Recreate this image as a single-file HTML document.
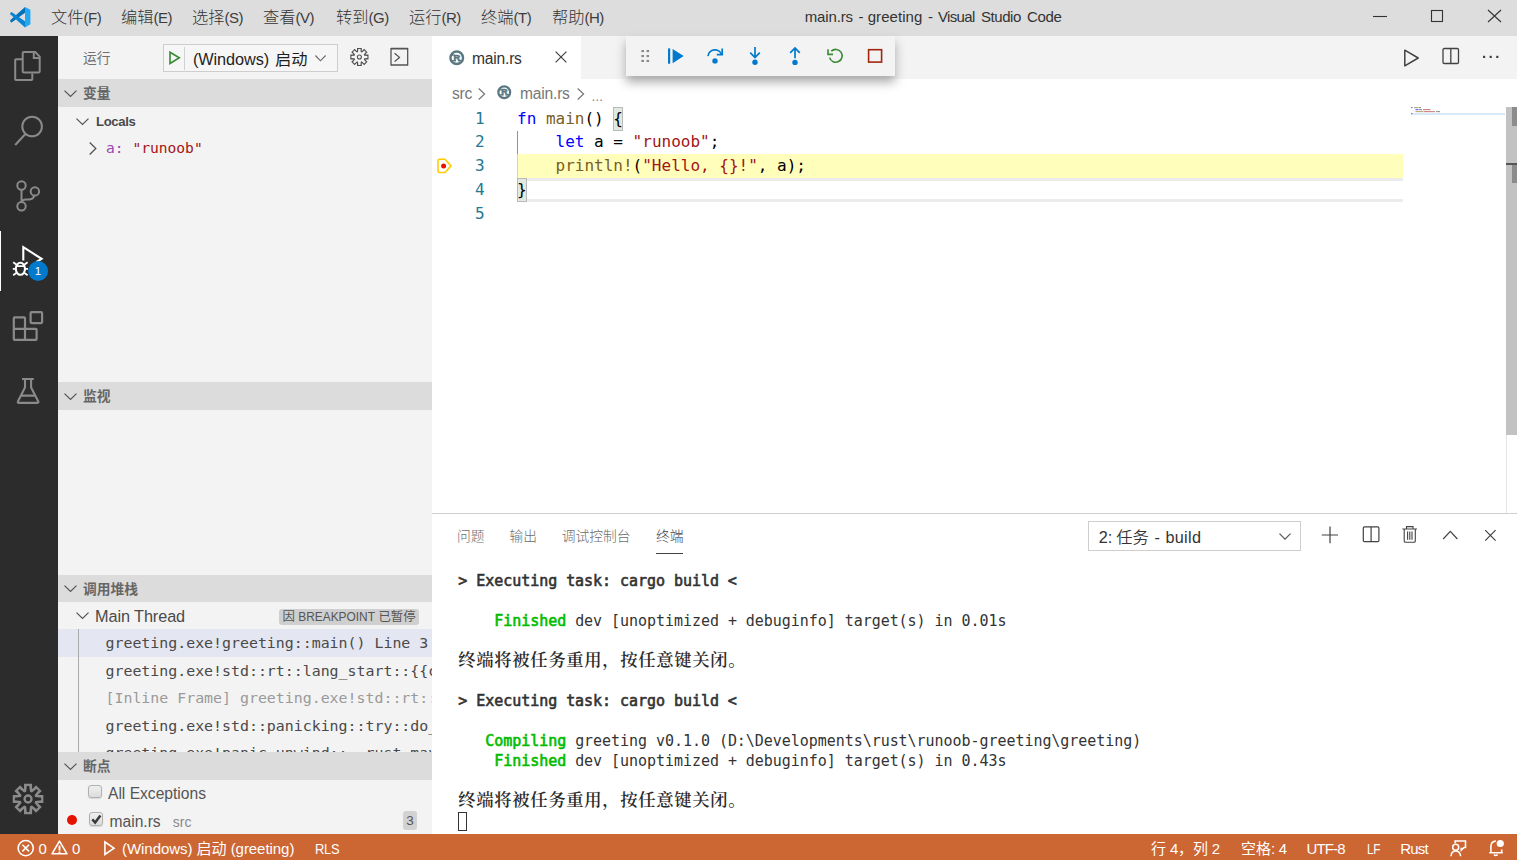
<!DOCTYPE html>
<html lang="zh-CN">
<head>
<meta charset="utf-8">
<title>main.rs - greeting - Visual Studio Code</title>
<style>
*{box-sizing:border-box;margin:0;padding:0}
html,body{width:1517px;height:860px;overflow:hidden;background:#fff}
body{position:relative;font-family:"Liberation Sans","Noto Sans CJK SC",sans-serif;color:#333;font-size:16px}
.abs{position:absolute}
.mono{font-family:"DejaVu Sans Mono","Liberation Mono","Noto Sans CJK SC",monospace}
svg{display:block;overflow:visible}
/* title bar */
#titlebar{left:0;top:0;width:1517px;height:36px;background:#dddddd}
.menu{top:0;height:36px;line-height:34px;font-size:16.25px;color:#333;white-space:nowrap;font-weight:300}
.menu i{font-style:normal;font-size:15px;letter-spacing:-0.5px;font-weight:400;color:#3c3c3c}
#wtitle{top:0;height:36px;line-height:34px;font-size:15px;color:#333;white-space:nowrap;letter-spacing:-0.03px}
/* activity bar */
#activity{left:0;top:36px;width:58px;height:798px;background:#2c2c2c}
/* sidebar */
#sidebar{left:58px;top:36px;width:374px;height:798px;background:#f3f3f3;overflow:hidden}
.sechead{left:0;width:374px;height:27.5px;background:#dcdcdc;font-weight:bold;font-size:13.75px;color:#666;line-height:30px}
.sechead span{position:absolute;left:25px;top:0;white-space:nowrap}
.row{left:0;width:374px;white-space:nowrap}
.cb{width:13.5px;height:13.5px;border:1px solid #b1b1b1;border-radius:3px;background:linear-gradient(#efefef,#dcdcdc);box-shadow:0 1px 1px rgba(0,0,0,0.12)}
/* editor */
#tabs{left:432px;top:36px;width:1085px;height:43px;background:#f3f3f3}
#tab1{left:0;top:0;width:149px;height:43px;background:#fff}
#editor{left:432px;top:79px;width:1085px;height:434px;background:#fff;overflow:hidden}
.ln{left:0;width:52.6px;text-align:right;color:#237893;font-size:16px;height:24px;line-height:24px}
.code{left:85px;white-space:pre;font-size:16px;height:24px;line-height:24px;color:#000}
.bc{height:27.5px;line-height:29.5px;font-size:15.6px;color:#777;white-space:nowrap;letter-spacing:-0.2px}
.k{color:#0000ff}.f{color:#795e26}.s{color:#a31515}
/* panel */
#panel{left:432px;top:513px;width:1085px;height:321px;background:#fff;border-top:1px solid #cfcfcf}
.ptab{top:12px;font-size:13.75px;color:#6c6c6c;white-space:nowrap;line-height:22px;font-weight:300}
.tl{left:26.3px;letter-spacing:-0.045px;white-space:pre;font-size:15px;height:20px;line-height:20px;color:#333}
.tl b{font-weight:normal;-webkit-text-stroke:0.6px currentColor}
.tl .g{color:#00bc00}
.cj{font-family:"Noto Serif CJK SC","Noto Sans CJK SC",serif;font-size:17.4px;letter-spacing:0.6px;font-weight:600;color:#2a2a2a;position:relative;top:-1.6px}
.dd{top:10px;height:27px;line-height:27px;font-size:16.25px;color:#333;white-space:nowrap}
/* status */
#status{left:0;top:834px;width:1517px;height:26px;background:#cc6633;color:#fff;font-size:15px;line-height:29px;white-space:nowrap}
#status .it{position:absolute;top:0;height:26px;letter-spacing:-0.3px}
#status .sx{transform-origin:0 50%}
#status .c{font-size:15px;letter-spacing:0}
</style>
</head>
<body>
<div id="titlebar" class="abs">
<svg class="abs" style="left:9.76px;top:6.7px" width="20.4" height="20.4" viewBox="0 0 100 100"><path d="M73.7 0V28.3L9.4 75.3Q6 76.5 3.5 73L0.8 68.5Q0 66 2.5 63.5Z" fill="#0070bd"/><path d="M9.4 25.2L73.5 70.2L73.7 100L2.5 36.5Q0 34 0.8 31.5L3.5 27Q6 23.8 9.4 25.2Z" fill="#0a84d4"/><path d="M73.7 0L100 13.7V84.8L73.7 100Z" fill="#24a7f1"/></svg>
<div class="abs menu" style="left:51px">文件<i>(F)</i></div>
<div class="abs menu" style="left:121px">编辑<i>(E)</i></div>
<div class="abs menu" style="left:192px">选择<i>(S)</i></div>
<div class="abs menu" style="left:263px">查看<i>(V)</i></div>
<div class="abs menu" style="left:336px">转到<i>(G)</i></div>
<div class="abs menu" style="left:409px">运行<i>(R)</i></div>
<div class="abs menu" style="left:481px">终端<i>(T)</i></div>
<div class="abs menu" style="left:552px">帮助<i>(H)</i></div>
<div id="wtitle" class="abs" style="left:805px;width:260px"><span style="position:absolute;left:-0.30px;letter-spacing:-0.129px">main.rs</span><span style="position:absolute;left:53.50px;letter-spacing:0.000px">-</span><span style="position:absolute;left:62.70px;letter-spacing:0.062px">greeting</span><span style="position:absolute;left:123.10px;letter-spacing:0.000px">-</span><span style="position:absolute;left:132.90px;letter-spacing:-0.650px">Visual</span><span style="position:absolute;left:176.00px;letter-spacing:-0.438px">Studio</span><span style="position:absolute;left:222.10px;letter-spacing:-0.372px">Code</span></div>
<svg class="abs" style="left:1373px;top:9px" width="130" height="14" viewBox="0 0 130 14" fill="none" stroke="#333" stroke-width="1.1"><path d="M0 7.5H14"/><rect x="58.5" y="1.5" width="11" height="11"/><path d="M115 1L128 13M128 1L115 13"/></svg>
</div>
<div id="activity" class="abs">
<div class="abs" style="left:0;top:195px;width:1.3px;height:60px;background:#fff"></div>
<svg class="abs" style="left:0;top:0" width="58" height="798" viewBox="0 36 58 798" fill="none" stroke="#8a8a8a" stroke-width="2" stroke-linejoin="round">
<!-- files -->
<path d="M32.3 73.5V79.2Q32.3 80 31.5 80H16Q15.2 80 15.2 79.2V60.1Q15.2 59.3 16 59.3H22.5"/>
<path d="M24 52H35.2L39.7 56.6V71.2Q39.7 72.5 38.4 72.5H24Q22.7 72.5 22.7 71.2V53.3Q22.7 52 24 52Z"/>
<path d="M33.8 52.5V58H39.5" stroke-linejoin="miter"/>
<!-- search -->
<circle cx="32.1" cy="126.5" r="9.8"/>
<path d="M25.6 133.8L15.2 145"/>
<!-- scm -->
<circle cx="21.5" cy="185.5" r="4.2"/><circle cx="21.5" cy="206.3" r="4.2"/><circle cx="34.9" cy="191.4" r="4.2"/>
<path d="M21.5 189.7V202.1"/><path d="M34.3 195.6Q33.3 199.4 29.5 199.4H26Q22.3 199.4 21.6 202"/>
<!-- extensions -->
<path d="M14.6 317.4H24.2Q25 317.4 25 318.2V328.8H35.8Q36.6 328.8 36.6 329.6V339Q36.6 339.8 35.8 339.8H14.6Q13.8 339.8 13.8 339V318.2Q13.8 317.4 14.6 317.4Z M13.8 328.8H25V339.8" stroke-width="2.2"/>
<rect x="30.6" y="312.2" width="11.5" height="10.9" rx="1" stroke-width="2.2"/>
<!-- flask -->
<path d="M22 379H33.8M25 380V387.6L17.9 401.5Q17.4 402.9 18.9 402.9H37.4Q38.9 402.9 38.3 401.5L31.1 387.6V380M21.2 395.6H35" stroke-width="2.1"/>
<!-- gear -->
<path d="M43.35 794.95 L43.35 803.05 L37.83 803.05 L41.73 806.95 L36.00 812.68 L32.10 808.78 L32.10 814.30 L24.00 814.30 L24.00 808.78 L20.10 812.68 L14.37 806.95 L18.27 803.05 L12.75 803.05 L12.75 794.95 L18.27 794.95 L14.37 791.05 L20.10 785.32 L24.00 789.22 L24.00 783.70 L32.10 783.70 L32.10 789.22 L36.00 785.32 L41.73 791.05 L37.83 794.95Z" fill="#8a8a8a" stroke="none"/><path d="M33.05 796.80 L41.15 797.80 L41.15 800.20 L33.05 801.20ZM33.14 800.98 L38.16 807.41 L36.46 809.11 L30.03 804.09ZM30.25 804.00 L29.25 812.10 L26.85 812.10 L25.85 804.00ZM26.07 804.09 L19.64 809.11 L17.94 807.41 L22.96 800.98ZM23.05 801.20 L14.95 800.20 L14.95 797.80 L23.05 796.80ZM22.96 797.02 L17.94 790.59 L19.64 788.89 L26.07 793.91ZM25.85 794.00 L26.85 785.90 L29.25 785.90 L30.25 794.00ZM30.03 793.91 L36.46 788.89 L38.16 790.59 L33.14 797.02Z" fill="#2c2c2c" stroke="none"/><circle cx="28.05" cy="799" r="7.40" fill="#2c2c2c" stroke="none"/><circle cx="28.05" cy="799" r="3.50" fill="none" stroke="#8a8a8a" stroke-width="2.30"/>
<!-- debug (active) -->
<g stroke="#fff" stroke-width="2.1">
<path d="M23.3 260.5V247.2L41.6 258.8L36.5 262" stroke-linejoin="miter"/>
<ellipse cx="20.4" cy="268.8" rx="4.6" ry="6"/>
<path d="M16 266.2H24.8M12.8 268.8H15.8M25 268.8H28M13.2 262.3L16.6 264.8M27.6 262.3L24.2 264.8M13.2 275.3L16.6 272.8M27.6 275.3L24.2 272.8" stroke-width="1.8"/>
</g>
<circle cx="38.1" cy="271" r="10" fill="#007acc" stroke="none"/>
</svg>
<div class="abs" style="left:28px;top:225px;width:20px;height:20px;line-height:20px;text-align:center;color:#fff;font-size:11.5px">1</div>
</div>
<div id="sidebar" class="abs">
<div class="abs" style="left:25px;top:11.7px;font-size:13.75px;color:#717171;line-height:22px">运行</div>
<div class="abs" style="left:105px;top:8px;width:175px;height:28px;border:1px solid #cecece;background:#f6f6f6"></div>
<svg class="abs" style="left:111px;top:14px" width="12" height="15" viewBox="0 0 12 15" fill="none" stroke="#388a34" stroke-width="1.6" stroke-linejoin="miter"><path d="M1 2.2L10.3 7.8L1 13.5Z"/></svg>
<div class="abs" style="left:126px;top:11px;width:1px;height:23px;background:#d0d0d0"></div>
<div class="abs" style="left:135px;top:10px;height:26px;line-height:27px;font-size:16.25px;color:#1e1e1e;white-space:nowrap;letter-spacing:-0.08px">(Windows)</div><div class="abs" style="left:217px;top:10px;height:26px;line-height:27px;font-size:16.25px;color:#1e1e1e;white-space:nowrap">启动</div>
<svg class="abs" style="left:257px;top:18.6px" width="11" height="7" viewBox="0 0 11 7" fill="none" stroke="#666" stroke-width="1.1"><path d="M0.4 0.5L5.5 5.8L10.6 0.5"/></svg><svg class="abs" style="left:282px;top:4px" width="80" height="36" viewBox="340 40 80 36" fill="none" stroke="#4a4a4a" stroke-width="1.15"><path d="M368.50 54.60 L368.50 59.40 L365.19 59.40 L367.53 61.74 L364.14 65.13 L361.80 62.79 L361.80 66.10 L357.00 66.10 L357.00 62.79 L354.66 65.13 L351.27 61.74 L353.61 59.40 L350.30 59.40 L350.30 54.60 L353.61 54.60 L351.27 52.26 L354.66 48.87 L357.00 51.21 L357.00 47.90 L361.80 47.90 L361.80 51.21 L364.14 48.87 L367.53 52.26 L365.19 54.60Z" fill="#505050" stroke="none"/><path d="M362.40 55.50 L367.40 55.90 L367.40 58.10 L362.40 58.50ZM362.58 58.06 L365.83 61.88 L364.28 63.43 L360.46 60.18ZM360.90 60.00 L360.50 65.00 L358.30 65.00 L357.90 60.00ZM358.34 60.18 L354.52 63.43 L352.97 61.88 L356.22 58.06ZM356.40 58.50 L351.40 58.10 L351.40 55.90 L356.40 55.50ZM356.22 55.94 L352.97 52.12 L354.52 50.57 L358.34 53.82ZM357.90 54.00 L358.30 49.00 L360.50 49.00 L360.90 54.00ZM360.46 53.82 L364.28 50.57 L365.83 52.12 L362.58 55.94Z" fill="#f3f3f3" stroke="none"/><circle cx="359.4" cy="57" r="4.9" fill="#f3f3f3" stroke="none"/><circle cx="359.4" cy="57" r="2.0" fill="none" stroke="#505050" stroke-width="1.1"/>
<path d="M391 48.7H407.7M391 65H407.7" stroke-width="1.7" stroke="#555"/><path d="M391 48V65.6M407.7 48V65.6" stroke-width="1.2"/><path d="M394.6 53.2L399.5 57.4L394.6 61.6" stroke-width="1.2"/></svg>
<div class="abs sechead" style="top:43px"><span>变量</span></div><svg class="abs" style="left:6px;top:53.5px" width="13" height="8" viewBox="0 0 13 8" fill="none" stroke="#555" stroke-width="1.25"><path d="M0.5 0.6L6.5 6.4L12.5 0.6"/></svg><svg class="abs" style="left:18px;top:81.8px" width="13" height="8" viewBox="0 0 13 8" fill="none" stroke="#555" stroke-width="1.25"><path d="M0.5 0.6L6.5 6.4L12.5 0.6"/></svg><div class="abs row" style="left:38px;top:71px;height:27.5px;line-height:27.5px;font-weight:bold;font-size:13.1px;letter-spacing:-0.35px;color:#4a4a4a;padding-top:1.2px">Locals</div>
<svg class="abs" style="left:31px;top:106px" width="8" height="13" viewBox="0 0 8 13" fill="none" stroke="#555" stroke-width="1.3"><path d="M0.7 0.5L6.8 6.5L0.7 12.5"/></svg><div class="abs row mono" style="left:48px;top:97.5px;height:27.5px;line-height:27.5px;font-size:14.6px"><span style="color:#9b46b0">a:</span> <span style="color:#a31515">"runoob"</span></div>
<div class="abs sechead" style="top:346px"><span>监视</span></div><svg class="abs" style="left:6px;top:356.5px" width="13" height="8" viewBox="0 0 13 8" fill="none" stroke="#555" stroke-width="1.25"><path d="M0.5 0.6L6.5 6.4L12.5 0.6"/></svg><div class="abs sechead" style="top:538.5px"><span>调用堆栈</span></div><svg class="abs" style="left:6px;top:549.0px" width="13" height="8" viewBox="0 0 13 8" fill="none" stroke="#555" stroke-width="1.25"><path d="M0.5 0.6L6.5 6.4L12.5 0.6"/></svg><svg class="abs" style="left:18px;top:576.2px" width="13" height="8" viewBox="0 0 13 8" fill="none" stroke="#555" stroke-width="1.25"><path d="M0.5 0.6L6.5 6.4L12.5 0.6"/></svg><div class="abs row" style="left:38px;top:567.2px;height:27.5px;line-height:27.5px;font-size:16.25px;color:#4a4a4a;letter-spacing:-0.08px;margin-left:-1px">Main Thread</div>
<div class="abs" style="left:221px;top:572.5px;width:140px;height:16.5px;border-radius:3px;background:#cfcfcf;font-size:12.4px;line-height:16.5px;color:#555;text-align:center;white-space:nowrap">因 <span style="font-size:11.9px">BREAKPOINT</span> 已暂停</div>
<div class="abs" style="left:0;top:593px;width:374px;height:27.5px;background:#e4e6f1"></div>
<div class="abs" style="left:20px;top:593px;width:1px;height:130px;background:#a9a9a9"></div>
<div class="abs row mono" style="left:47.5px;top:594.0px;height:27.5px;line-height:27.5px;font-size:14.9px;color:#4a4a4a;width:326px;overflow:hidden">greeting.exe!greeting::main() Line 3</div>
<div class="abs row mono" style="left:47.5px;top:621.5px;height:27.5px;line-height:27.5px;font-size:14.9px;color:#4a4a4a;width:326px;overflow:hidden">greeting.exe!std::rt::lang_start::{{closure}}</div>
<div class="abs row mono" style="left:47.5px;top:649.0px;height:27.5px;line-height:27.5px;font-size:14.9px;color:#9a9a9a;width:326px;overflow:hidden">[Inline Frame] greeting.exe!std::rt::lang_start_internal</div>
<div class="abs row mono" style="left:47.5px;top:676.5px;height:27.5px;line-height:27.5px;font-size:14.9px;color:#4a4a4a;width:326px;overflow:hidden">greeting.exe!std::panicking::try::do_call</div>
<div class="abs row mono" style="left:47.5px;top:704.0px;height:27.5px;line-height:27.5px;font-size:14.9px;color:#4a4a4a;width:326px;overflow:hidden">greeting.exe!panic_unwind::__rust_maybe_catch_panic</div>
<div class="abs" style="left:0;top:716px;width:374px;height:90px;background:#f3f3f3"></div>
<div class="abs sechead" style="top:716px"><span>断点</span></div><svg class="abs" style="left:6px;top:726.5px" width="13" height="8" viewBox="0 0 13 8" fill="none" stroke="#555" stroke-width="1.25"><path d="M0.5 0.6L6.5 6.4L12.5 0.6"/></svg><div class="abs cb" style="left:30.3px;top:748.8px"></div>
<div class="abs row" style="left:50px;top:744px;height:27.5px;line-height:27.5px;font-size:15.6px;color:#555">All Exceptions</div>
<div class="abs" style="left:9.4px;top:779px;width:10px;height:10px;border-radius:5px;background:#e51400"></div>
<div class="abs cb" style="left:31px;top:776px"><svg width="13" height="13" viewBox="0 0 13 13" fill="none" stroke="#3a3a3a" stroke-width="2.5"><path d="M2.3 6.3L5.2 9.6L10.4 2.6"/></svg></div>
<div class="abs row" style="left:51.5px;top:771.5px;height:27.5px;line-height:27.5px;font-size:15.6px;color:#555">main.rs<span style="font-size:14px;color:#8a8a8a;margin-left:12.2px">src</span></div>
<div class="abs" style="left:345px;top:775px;width:14px;height:19px;border-radius:3px;background:#d2d2d2;color:#555;font-size:13.5px;line-height:19px;text-align:center">3</div>
</div>
<div id="tabs" class="abs"><div id="tab1" class="abs"></div>
<svg class="abs" style="left:16.5px;top:13.5px" width="15.5" height="15.5" viewBox="0 0 16 16"><circle cx="8" cy="8" r="6.5" fill="none" stroke="#5b7882" stroke-width="2.5"/><path d="M2.6 5.4H6.2M2.6 10.9H7.2M9.2 10.9H13.4" stroke="#5b7882" stroke-width="1.3"/><text x="8.1" y="11.5" text-anchor="middle" font-family="Liberation Sans,sans-serif" font-weight="bold" font-size="9.8" fill="#5b7882" stroke="#5b7882" stroke-width="0.6">R</text></svg>
<div class="abs" style="left:40px;top:8.8px;height:27px;line-height:27px;font-size:15.6px;color:#333;white-space:nowrap;letter-spacing:-0.2px">main.rs</div>
<svg class="abs" style="left:123px;top:15.3px" width="12" height="12" viewBox="0 0 12 12" fill="none" stroke="#424242" stroke-width="1.2"><path d="M0.6 0.6L11.4 11.4M11.4 0.6L0.6 11.4"/></svg>
<!-- editor actions -->
<svg class="abs" style="left:970px;top:12px" width="20" height="20" viewBox="0 0 20 20" fill="none" stroke="#424242" stroke-width="1.5" stroke-linejoin="round"><path d="M2.8 2.2L16.2 10L2.8 17.8Z"/></svg>
<svg class="abs" style="left:1010px;top:11px" width="18" height="18" viewBox="0 0 18 18" fill="none" stroke="#424242" stroke-width="1.3"><rect x="1" y="1.5" width="15.5" height="15" rx="1.2"/><path d="M8.8 1.5V16.5"/></svg>
<svg class="abs" style="left:1051px;top:19px" width="16" height="4" viewBox="0 0 16 4" fill="#424242"><rect x="0" y="0.8" width="2.2" height="2.2"/><rect x="6.6" y="0.8" width="2.2" height="2.2"/><rect x="13.2" y="0.8" width="2.2" height="2.2"/></svg>
</div>
<div id="editor" class="abs">
<div class="abs bc" style="left:20px;top:0">src</div>
<svg class="abs" style="left:46px;top:9px" width="8" height="12" viewBox="0 0 8 12" fill="none" stroke="#777" stroke-width="1.2"><path d="M0.7 0.5L6.6 6L0.7 11.5"/></svg>
<svg class="abs" style="left:64.5px;top:6px" width="14.5" height="14.5" viewBox="0 0 16 16"><circle cx="8" cy="8" r="6.5" fill="none" stroke="#5b7882" stroke-width="2.5"/><path d="M2.6 5.4H6.2M2.6 10.9H7.2M9.2 10.9H13.4" stroke="#5b7882" stroke-width="1.3"/><text x="8.1" y="11.5" text-anchor="middle" font-family="Liberation Sans,sans-serif" font-weight="bold" font-size="9.8" fill="#5b7882" stroke="#5b7882" stroke-width="0.6">R</text></svg>
<div class="abs bc" style="left:88px;top:0">main.rs</div>
<svg class="abs" style="left:145px;top:9px" width="8" height="12" viewBox="0 0 8 12" fill="none" stroke="#777" stroke-width="1.2"><path d="M0.7 0.5L6.6 6L0.7 11.5"/></svg>
<div class="abs bc" style="left:159.3px;top:3.5px;font-size:12px">…</div>
<div class="abs" style="left:85.5px;top:75px;width:885.5px;height:24px;background:#ffffbb"></div>
<div class="abs" style="left:85.5px;top:99px;width:885.5px;height:2.7px;background:#ececec"></div>
<div class="abs" style="left:85.5px;top:120.1px;width:885.5px;height:2.7px;background:#ececec"></div>
<div class="abs" style="left:181px;top:28px;width:10px;height:23.8px;background:#e0eae0;border:1px solid #b9b9b9"></div>
<div class="abs" style="left:85px;top:99px;width:10px;height:23.9px;background:#e0eae0;border:1px solid #b9b9b9"></div>
<div class="abs" style="left:85px;top:52px;width:1px;height:23px;background:#939393"></div><div class="abs" style="left:85px;top:75px;width:1px;height:24px;background:#d9d99c"></div>
<svg class="abs" style="left:5px;top:79px" width="16" height="16" viewBox="437 158 16 16"><path d="M439.2 159.3H445L451 165.9L445 172.5H439.2Q438 172.5 438 171.3V160.5Q438 159.3 439.2 159.3Z" fill="none" stroke="#ffcc00" stroke-width="1.6" stroke-linejoin="round"/><circle cx="443.6" cy="166" r="2.5" fill="#e51400"/></svg>
<div class="abs ln mono" style="top:27.5px">1</div><div class="abs code mono" style="top:27.5px"><span class="k">fn</span> <span class="f">main</span>() {</div>
<div class="abs ln mono" style="top:51.25px">2</div><div class="abs code mono" style="top:51.25px">    <span class="k">let</span> a = <span class="s">"runoob"</span>;</div>
<div class="abs ln mono" style="top:75.0px">3</div><div class="abs code mono" style="top:75.0px">    <span class="f">println!</span>(<span class="s">"Hello, {}!"</span>, a);</div>
<div class="abs ln mono" style="top:98.75px">4</div><div class="abs code mono" style="top:98.75px">}</div>
<div class="abs ln mono" style="top:122.5px">5</div><div class="abs code mono" style="top:122.5px"></div>
<div class="abs" style="left:979px;top:34px;width:94px;height:2px;background:#d6e9f8"></div>
<svg class="abs" style="left:979px;top:28px" width="40" height="8" viewBox="0 0 40 8"><rect x="0" y="0" width="1.5" height="1.2" fill="#6a6aff"/><rect x="3" y="0" width="4" height="1.2" fill="#c0aa80"/><rect x="7.5" y="0" width="2.5" height="1.2" fill="#999"/><rect x="4.5" y="2" width="3" height="1.2" fill="#6a6aff"/><rect x="8" y="2" width="3" height="1.2" fill="#999"/><rect x="12" y="2" width="7.5" height="1.2" fill="#d08a8a"/><rect x="4.5" y="4" width="8" height="1.2" fill="#c0aa80"/><rect x="13" y="4" width="11" height="1.2" fill="#d08a8a"/><rect x="25" y="4" width="4" height="1.2" fill="#999"/><rect x="0" y="6" width="1.5" height="1.2" fill="#88a"/></svg>
<div class="abs" style="left:1074px;top:28px;width:11px;height:406px;border-left:1px solid #e4e4e4"></div>
<div class="abs" style="left:1074px;top:28px;width:11px;height:328px;background:#c2c2c2"></div>
<div class="abs" style="left:1080px;top:28px;width:5px;height:18.5px;background:#8c8c8c"></div>
<div class="abs" style="left:1080px;top:86px;width:5px;height:18px;background:#8c8c8c"></div>
<div class="abs" style="left:1074px;top:84px;width:11px;height:2px;background:#555"></div>
</div>
<div id="dbgbar" class="abs" style="left:626px;top:36px;width:269px;height:40px;background:#f3f3f3;box-shadow:0 6.25px 10px #a8a8a8"></div>
<svg class="abs" style="left:626px;top:36px" width="269" height="40" viewBox="626 36 269 40" fill="none">
<g fill="#8a8a8a"><rect x="641.4" y="50" width="2.6" height="2.1"/><rect x="646.5" y="50" width="2.6" height="2.1"/><rect x="641.4" y="55" width="2.6" height="2.1"/><rect x="646.5" y="55" width="2.6" height="2.1"/><rect x="641.4" y="59.9" width="2.6" height="2.1"/><rect x="646.5" y="59.9" width="2.6" height="2.1"/></g>
<g fill="#007acc"><rect x="668" y="48.4" width="2.2" height="15.3"/><path d="M672.6 48.9L683.7 56L672.6 63.2Z"/>
<circle cx="715" cy="60.9" r="2.7"/><circle cx="755" cy="62.3" r="2.7"/><circle cx="795" cy="62.4" r="2.7"/></g>
<g stroke="#007acc" stroke-width="1.7">
<path d="M708 56.2A7 7 0 0 1 721.6 54.6"/><path d="M722.2 48.4V54.6H716.8"/>
<path d="M755 47V57.6M750.2 52.6L755 57.6L759.8 52.6"/>
<path d="M795 58.3V48M790.2 52.9L795 48L799.8 52.9"/>
</g>
<g stroke="#388a34" stroke-width="1.6"><path d="M831.3 51.2A6.4 6.4 0 1 1 829.6 57.6"/><path d="M828 49.2V54.4H833"/></g>
<rect x="868.6" y="49.7" width="13" height="12.4" stroke="#a1260d" stroke-width="1.6"/>
</svg>
<div id="panel" class="abs">
<div class="abs ptab" style="left:25px">问题</div>
<div class="abs ptab" style="left:77.39999999999998px">输出</div>
<div class="abs ptab" style="left:129.79999999999995px">调试控制台</div>
<div class="abs ptab" style="left:224px;color:#424242">终端</div>
<div class="abs" style="left:224px;top:38.5px;width:26.5px;height:1px;background:#424242"></div>
<div class="abs" style="left:656px;top:7px;width:213px;height:30px;border:1px solid #cecece;background:#fff"></div>
<div class="abs dd" style="left:666.7px">2:</div><div class="abs dd" style="left:684.2px;font-weight:350">任务</div><div class="abs dd" style="left:722.6px">-</div><div class="abs dd" style="left:733.4px;letter-spacing:0.3px">build</div>
<svg class="abs" style="left:846.5999999999999px;top:18.5px" width="12" height="7" viewBox="0 0 12 7" fill="none" stroke="#555" stroke-width="1.2"><path d="M0.5 0.6L6 6.1L11.5 0.6"/></svg>
<svg class="abs" style="left:888px;top:10px" width="180" height="22" viewBox="1320 524 180 22" fill="none" stroke="#424242" stroke-width="1.2">
<path d="M1330 526.5V543.3M1321.8 535H1338"/>
<rect x="1363.3" y="526.9" width="15.6" height="14.8" rx="1.2"/><path d="M1371.1 526.9V541.7"/>
<path d="M1402.4 529H1417M1406.5 528.8V526.6H1413V528.8M1404.2 529.2V541Q1404.2 542.3 1405.5 542.3H1414Q1415.3 542.3 1415.3 541V529.2M1407.6 531.5V539.8M1409.8 531.5V539.8M1412 531.5V539.8" stroke-width="1.1"/>
<path d="M1443.2 539L1450.3 531.4L1457.4 539"/>
<path d="M1485.2 530.2L1495.6 540.6M1495.6 530.2L1485.2 540.6"/>
</svg>
<div class="abs tl mono" style="top:56.5px"><b>&gt; Executing task: cargo build &lt;</b></div>
<div class="abs tl mono" style="top:96.5px">    <b class="g">Finished</b> dev [unoptimized + debuginfo] target(s) in 0.01s</div>
<div class="abs tl mono" style="top:136.5px"><span class="cj">终端将被任务重用，按任意键关闭。</span></div>
<div class="abs tl mono" style="top:176.5px"><b>&gt; Executing task: cargo build &lt;</b></div>
<div class="abs tl mono" style="top:216.5px">   <b class="g">Compiling</b> greeting v0.1.0 (D:\Developments\rust\runoob-greeting\greeting)</div>
<div class="abs tl mono" style="top:236.5px">    <b class="g">Finished</b> dev [unoptimized + debuginfo] target(s) in 0.43s</div>
<div class="abs tl mono" style="top:276.5px"><span class="cj">终端将被任务重用，按任意键关闭。</span></div>
<div class="abs" style="left:25.5px;top:297.5px;width:9px;height:19.5px;border:1px solid #333"></div>
</div>
<div id="status" class="abs">
<svg class="abs" style="left:16px;top:4px" width="54" height="20" viewBox="16 838 54 20" fill="none" stroke="#fff" stroke-width="1.6"><circle cx="25.7" cy="848.1" r="7.6"/><path d="M22.4 844.8L29 851.4M29 844.8L22.4 851.4"/><path d="M59.5 841.2L67 853.8H52Z" stroke-linejoin="round"/><path d="M59.5 845.6V850.4M59.5 851.4V853" stroke-width="1.9"/></svg>
<div class="it" style="left:38.5px">0</div><div class="it" style="left:72px">0</div>
<svg class="abs" style="left:103px;top:6px" width="14" height="17" viewBox="103 840 14 17" fill="none" stroke="#fff" stroke-width="1.6" stroke-linejoin="miter"><path d="M104.9 842L114 848.2L104.9 854.4Z"/></svg>
<div class="it" style="left:122px;letter-spacing:-0.05px">(Windows) <span class="c">启动</span> (greeting)</div>
<div class="it sx" style="left:314.5px;transform:scaleX(.86)">RLS</div>
<div class="it" style="left:1151px"><span class="c">行</span> 4<span class="c">，列</span> 2</div>
<div class="it" style="left:1241px"><span class="c">空格</span>: 4</div>
<div class="it" style="left:1306.5px;letter-spacing:-0.85px">UTF-8</div>
<div class="it sx" style="left:1366.5px;transform:scaleX(.78)">LF</div>
<div class="it" style="left:1400.3px;letter-spacing:-0.8px">Rust</div>
<svg class="abs" style="left:1449px;top:4px" width="60" height="20" viewBox="1449 838 60 20" fill="none" stroke="#fff" stroke-width="1.55"><circle cx="1455.7" cy="847.2" r="3"/><path d="M1451 856.2Q1451.3 850.9 1455.7 850.9Q1460.1 850.9 1460.6 856.2"/><path d="M1455.1 843.2V840.9H1465.5V847.4H1464L1461.3 850.1V847.8"/>
<path d="M1489.3 852.7H1502.8M1490.9 852.4V846.5Q1490.9 841.3 1495.9 840.9M1501.7 849.4V852.4M1494 854.6Q1495.8 856.4 1497.6 854.6"/><circle cx="1500.3" cy="843.5" r="3.6" fill="#fff" stroke="none"/></svg>
</div>
</body>
</html>
